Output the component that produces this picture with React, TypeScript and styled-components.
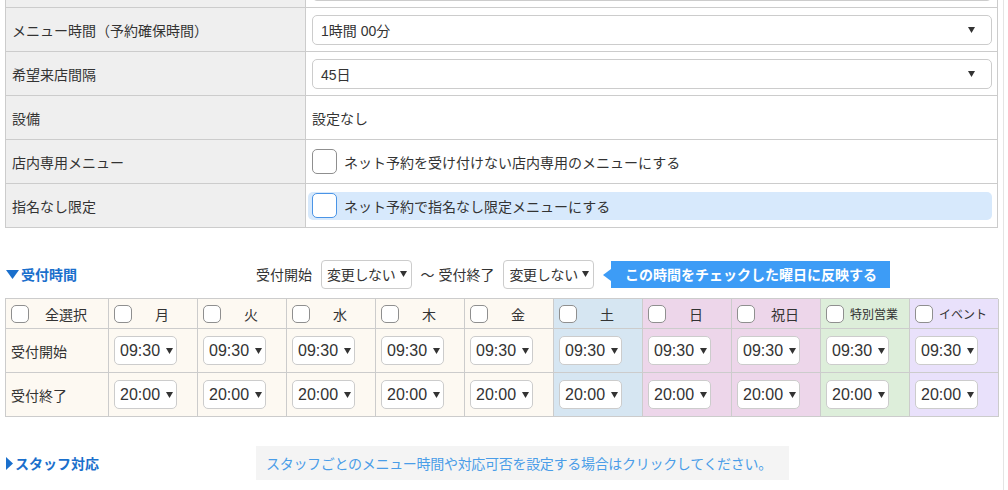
import styled, { createGlobalStyle } from 'styled-components';

const GlobalStyle = createGlobalStyle`
  body {
    margin: 0;
    background: #fff;
    color: #333;
    font-family: "Liberation Sans", "Noto Sans CJK JP", sans-serif;
    font-size: 14px;
    overflow: hidden;
  }
`;

const Page = styled.div`
  width: 993px;
  height: 526px;
  margin-top: -36px;
  padding: 0 5px;
  border-right: 1px solid #e4e4e4;
`;

const FormTable = styled.div`
  display: grid;
  grid-template-columns: 300px 1fr;
  border-left: 1px solid #ccc;
  border-right: 1px solid #ccc;
`;

const LabelCell = styled.div`
  height: 43px;
  display: flex;
  align-items: center;
  padding-left: 6px;
  background: #efefef;
  border-right: 1px solid #ccc;
  border-bottom: 1px solid #ccc;
  font-size: 14px;
`;

const ValueCell = styled.div`
  height: 43px;
  display: flex;
  align-items: center;
  padding: 0 5px 0 6px;
  border-bottom: 1px solid #ccc;
  font-size: 14px;
`;

const Arrow = () => (
  <svg width="7" height="6" viewBox="0 0 7 6">
    <path d="M0 0h7L3.5 6z" fill="#333" />
  </svg>
);

const WideSelect = styled.div`
  flex: 1;
  height: 28px;
  display: flex;
  align-items: center;
  justify-content: space-between;
  padding: 0 16px 0 8px;
  border: 1px solid #ccc;
  border-radius: 5px;
  background: #fff;
`;

const CheckLine = styled.label<{ $active?: boolean }>`
  flex: 1;
  display: flex;
  align-items: center;
  gap: 7px;
  height: 28px;
  margin-left: -4px;
  padding-left: 4px;
  border-radius: 5px;
  background: ${(p) => (p.$active ? '#d7e9fc' : 'transparent')};
`;

const Box = styled.span<{ $size: number; $active?: boolean }>`
  flex: none;
  width: ${(p) => p.$size}px;
  height: ${(p) => p.$size}px;
  box-sizing: border-box;
  border: 1px solid ${(p) => (p.$active ? '#4a94e6' : '#8f8f8f')};
  border-radius: 5px;
  background: #fff;
`;

const SectionHead = styled.div`
  display: flex;
  align-items: center;
  height: 28px;
  margin: 32px 0 10px;
`;

const SectionTitle = styled.div<{ $width: number }>`
  width: ${(p) => p.$width}px;
  display: flex;
  align-items: center;
  gap: 2px;
  color: #1a6fcc;
  font-weight: bold;
  font-size: 14px;
  padding-left: 1px;
`;

const Controls = styled.div`
  display: flex;
  align-items: center;
  gap: 9px;
`;

const SmallSelect = styled.div`
  height: 27px;
  display: flex;
  align-items: center;
  gap: 4px;
  padding: 0 4px 0 5px;
  border: 1px solid #ccc;
  border-radius: 4px;
  background: #fff;
  letter-spacing: -0.3px;
`;

const Badge = styled.div`
  position: relative;
  margin-left: 8px;
  height: 27px;
  display: flex;
  align-items: center;
  padding: 0 13px 0 14px;
  background: #3d9cf6;
  color: #fff;
  font-weight: bold;
  font-size: 14px;
  &::before {
    content: '';
    position: absolute;
    left: -8px;
    top: 8px;
    border-right: 8px solid #3d9cf6;
    border-top: 6px solid transparent;
    border-bottom: 6px solid transparent;
  }
`;

const Grid = styled.div`
  display: grid;
  grid-template-columns: 103px repeat(10, 89px);
  grid-template-rows: 30px 44px 44px;
  border-top: 1px solid #ccc;
  border-left: 1px solid #ccc;
`;

const Cell = styled.div<{ $bg: string }>`
  display: flex;
  align-items: center;
  padding: 0 5px;
  background: ${(p) => p.$bg};
  border-right: 1px solid #ccc;
  border-bottom: 1px solid #ccc;
  font-size: 14px;
`;

const DayName = styled.span<{ $small?: boolean }>`
  flex: 1;
  text-align: center;
  font-size: ${(p) => (p.$small ? 12 : 14)}px;
  white-space: nowrap;
`;

const TimeSelect = styled.div`
  box-sizing: border-box;
  width: 63px;
  height: 29px;
  display: flex;
  align-items: center;
  gap: 6px;
  padding-left: 5px;
  border: 1px solid #ccc;
  border-radius: 5px;
  background: #fff;
  font-size: 16px;
`;

const StaffRow = styled.div`
  display: flex;
  align-items: center;
  margin-top: 29px;
`;

const StaffNote = styled.div`
  height: 34px;
  display: flex;
  align-items: center;
  padding: 0 17px 0 10px;
  background: #f4f4f4;
  color: #4a9de8;
  font-size: 14px;
  letter-spacing: -0.3px;
`;

const days = [
  { name: '月', bg: '#fdf9f2' },
  { name: '火', bg: '#fdf9f2' },
  { name: '水', bg: '#fdf9f2' },
  { name: '木', bg: '#fdf9f2' },
  { name: '金', bg: '#fdf9f2' },
  { name: '土', bg: '#d6e6f2' },
  { name: '日', bg: '#edd6ea' },
  { name: '祝日', bg: '#edd6ea' },
  { name: '特別営業', bg: '#ddeeda', small: true },
  { name: 'イベント', bg: '#e9e1fb', small: true },
];

const cream = '#fdf9f2';

export default function App() {
  return (
    <Page>
      <GlobalStyle />
      <FormTable>
        {/* row scrolled above the top edge: only its bottom is visible */}
        <LabelCell />
        <ValueCell>
          <WideSelect />
        </ValueCell>
        <LabelCell>メニュー時間（予約確保時間）</LabelCell>
        <ValueCell>
          <WideSelect>
            <span>1時間 00分</span>
            <Arrow />
          </WideSelect>
        </ValueCell>
        <LabelCell>希望来店間隔</LabelCell>
        <ValueCell>
          <WideSelect>
            <span>45日</span>
            <Arrow />
          </WideSelect>
        </ValueCell>
        <LabelCell>設備</LabelCell>
        <ValueCell>設定なし</ValueCell>
        <LabelCell>店内専用メニュー</LabelCell>
        <ValueCell>
          <CheckLine>
            <Box $size={25} />
            ネット予約を受け付けない店内専用のメニューにする
          </CheckLine>
        </ValueCell>
        <LabelCell>指名なし限定</LabelCell>
        <ValueCell>
          <CheckLine $active>
            <Box $size={25} $active />
            ネット予約で指名なし限定メニューにする
          </CheckLine>
        </ValueCell>
      </FormTable>

      <SectionHead>
        <SectionTitle $width={250}>
          <svg width="13" height="9" viewBox="0 0 13 9">
            <path d="M0 0h13L6.5 9z" fill="#1a6fcc" />
          </svg>
          受付時間
        </SectionTitle>
        <Controls>
          <span>受付開始</span>
          <SmallSelect>
            変更しない
            <Arrow />
          </SmallSelect>
          <span>〜 受付終了</span>
          <SmallSelect>
            変更しない
            <Arrow />
          </SmallSelect>
          <Badge>この時間をチェックした曜日に反映する</Badge>
        </Controls>
      </SectionHead>

      <Grid>
        <Cell $bg={cream}>
          <Box $size={18} />
          <DayName>全選択</DayName>
        </Cell>
        {days.map((d) => (
          <Cell key={d.name} $bg={d.bg}>
            <Box $size={18} />
            <DayName $small={d.small}>{d.name}</DayName>
          </Cell>
        ))}
        <Cell $bg={cream}>受付開始</Cell>
        {days.map((d) => (
          <Cell key={'s' + d.name} $bg={d.bg}>
            <TimeSelect>
              09:30
              <Arrow />
            </TimeSelect>
          </Cell>
        ))}
        <Cell $bg={cream}>受付終了</Cell>
        {days.map((d) => (
          <Cell key={'e' + d.name} $bg={d.bg}>
            <TimeSelect>
              20:00
              <Arrow />
            </TimeSelect>
          </Cell>
        ))}
      </Grid>

      <StaffRow>
        <SectionTitle $width={250}>
          <svg width="7" height="13" viewBox="0 0 7 13">
            <path d="M0 0l7 6.5L0 13z" fill="#1a6fcc" />
          </svg>
          スタッフ対応
        </SectionTitle>
        <StaffNote>スタッフごとのメニュー時間や対応可否を設定する場合はクリックしてください。</StaffNote>
      </StaffRow>
    </Page>
  );
}
